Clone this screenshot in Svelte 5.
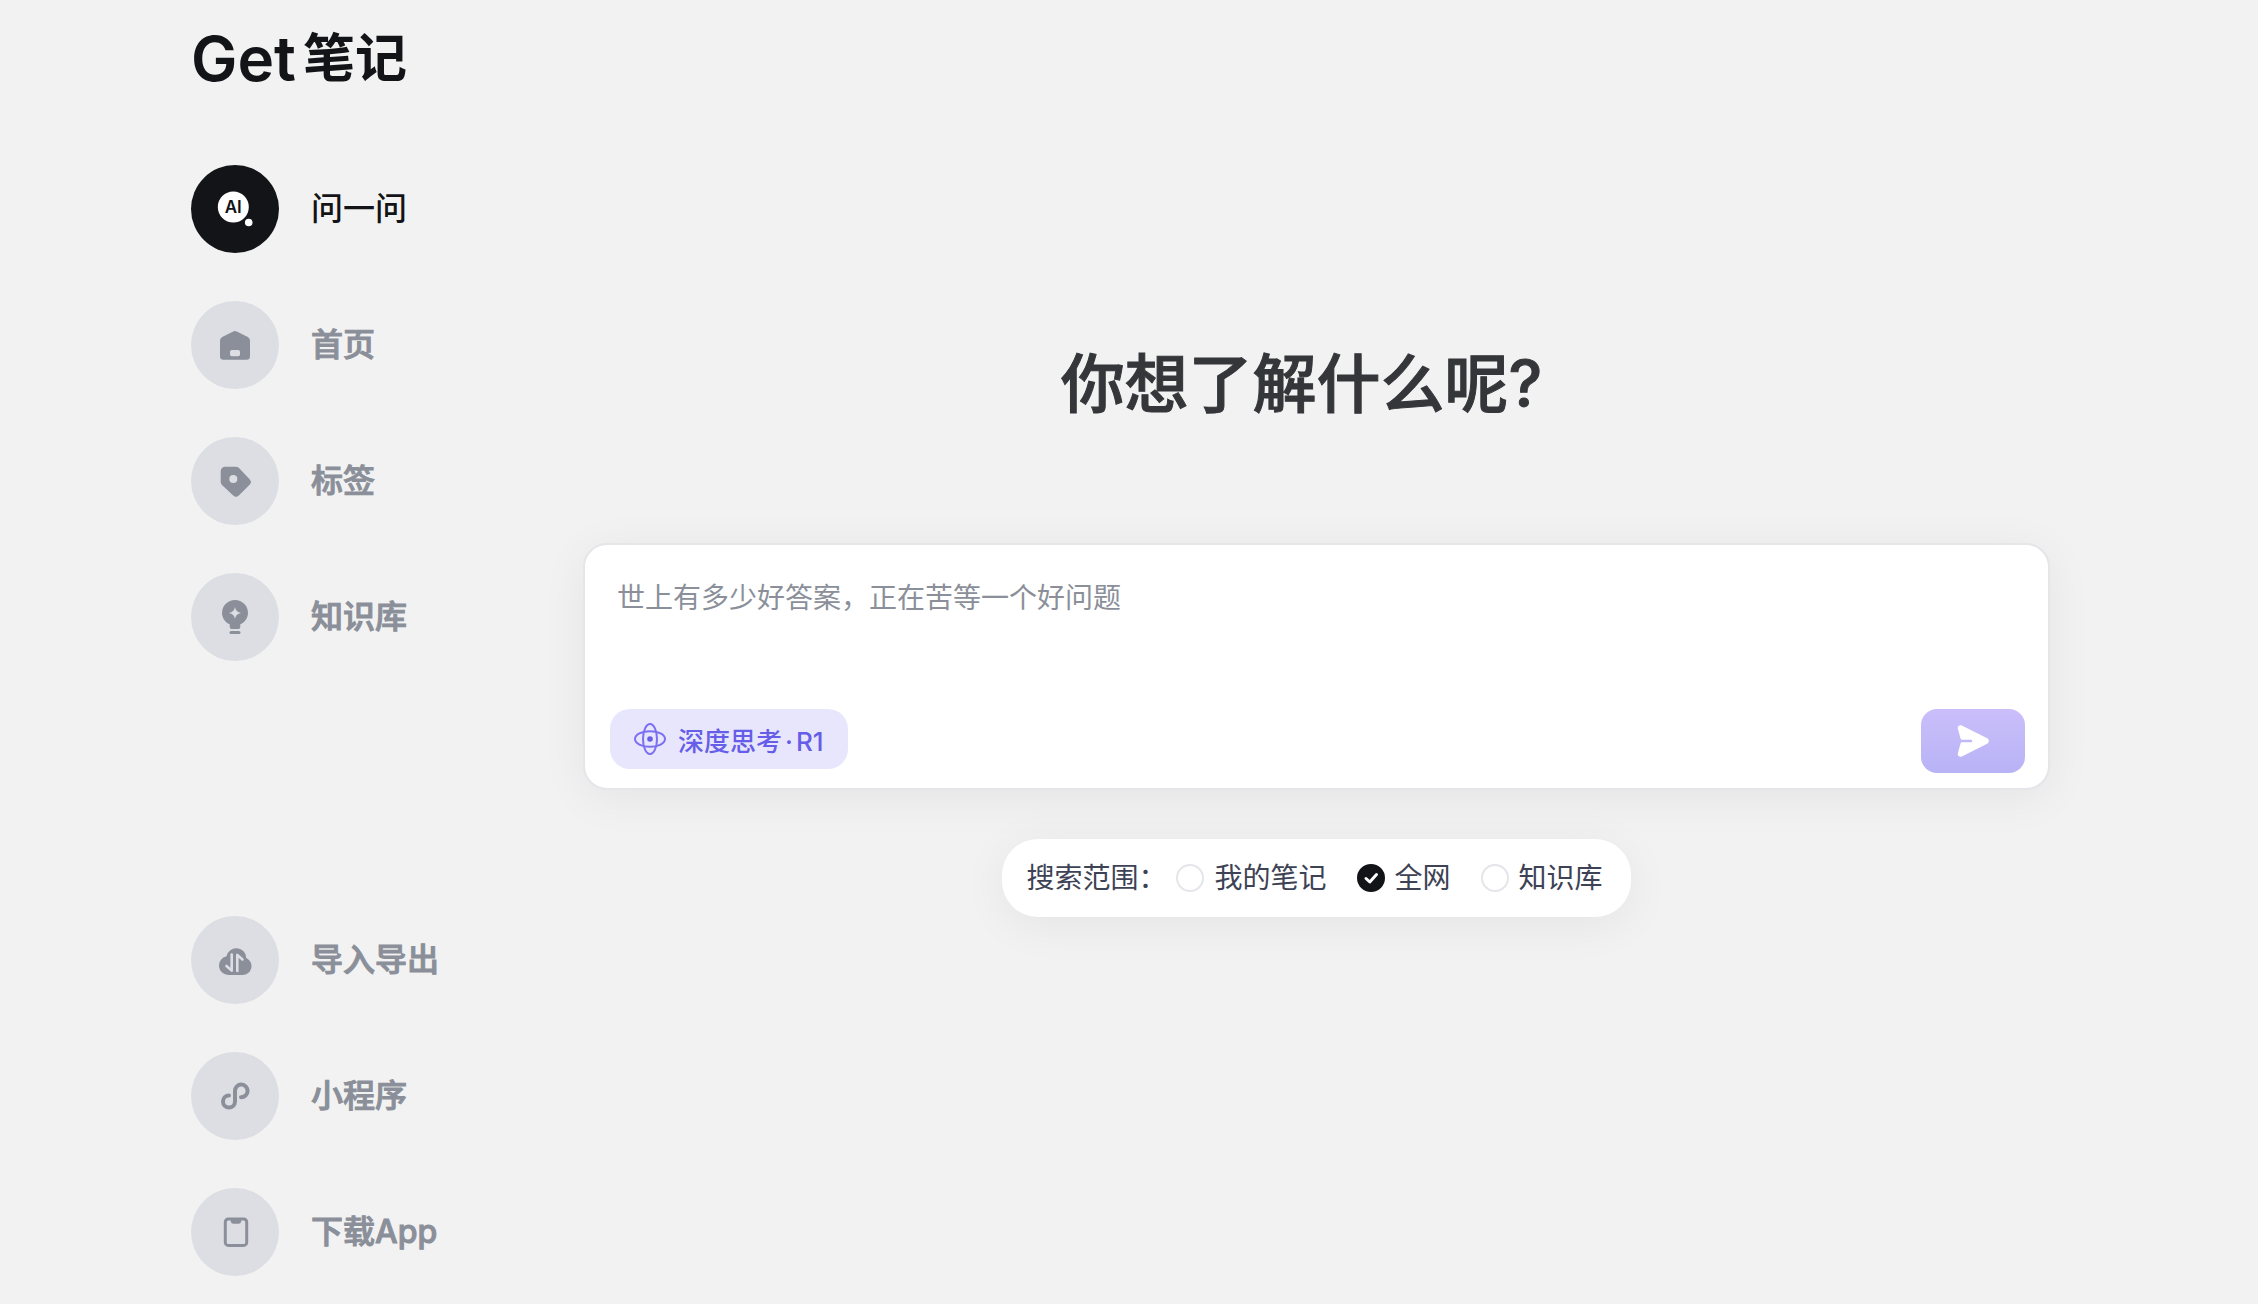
<script lang="ts">
  type NavItem = { id: string; label: string };

  const mainNav: NavItem[] = [
    { id: 'ask', label: '问一问' },
    { id: 'home', label: '首页' },
    { id: 'tag', label: '标签' },
    { id: 'library', label: '知识库' },
  ];

  const footNav: NavItem[] = [
    { id: 'transfer', label: '导入导出' },
    { id: 'mini', label: '小程序' },
    { id: 'app', label: '下载App' },
  ];

  const scopes = ['我的笔记', '全网', '知识库'];

  let active = $state('ask');
  let scope = $state('全网');
  let question = $state('');
  let deepThink = $state(true);
</script>

{#snippet icon(id: string)}
  <svg class="icon" viewBox="0 0 88 88" aria-hidden="true">
    {#if id === 'ask'}
      <circle class="bubble" cx="42.3" cy="42" r="15.5" />
      <circle class="bubble" cx="57.7" cy="57.5" r="3.8" />
      <text class="bubbleText" x="42.3" y="48" text-anchor="middle">AI</text>
    {:else if id === 'home'}
      <path
        fill-rule="evenodd"
        d="M42.2 30.5a4 4 0 0 1 3.6 0l11 5.6a4 4 0 0 1 2.2 3.5v15.6a3.5 3.5 0 0 1-3.5 3.5h-23a3.5 3.5 0 0 1-3.5-3.5v-15.6a4 4 0 0 1 2.2-3.5zM40.8 49a1.8 1.8 0 0 0-1.8 1.8v2.6a1.8 1.8 0 0 0 1.8 1.8h6.4a1.8 1.8 0 0 0 1.8-1.8v-2.6a1.8 1.8 0 0 0-1.8-1.8z"
      />
    {:else if id === 'tag'}
      <path
        fill-rule="evenodd"
        d="M34.2 29.7h10.6a4.5 4.5 0 0 1 3.2 1.3l10.6 11.2a4 4 0 0 1 0 5.6l-10.8 10.7a4 4 0 0 1-5.6 0l-11.2-10.6a4.5 4.5 0 0 1-1.3-3.2v-10.5a4.5 4.5 0 0 1 4.5-4.5zM42.3 38a4 4 0 1 0 0 8 4 4 0 0 0 0-8z"
      />
    {:else if id === 'library'}
      <path
        fill-rule="evenodd"
        d="M44 27a13 13 0 0 1 13 13c0 5-3.2 9.3-7.7 11.3v2.7a2 2 0 0 1-2 2h-6.6a2 2 0 0 1-2-2v-2.7c-4.5-2-7.7-6.3-7.7-11.3a13 13 0 0 1 13-13zM44 34c-.8 3.6-2.2 5-6 6 3.8 1 5.2 2.4 6 6 .8-3.6 2.2-5 6-6-3.8-1-5.2-2.4-6-6z"
      />
      <rect x="38.5" y="58" width="11" height="3" rx="1.5" />
    {:else if id === 'transfer'}
      <path d="M37.4 59a9.5 9.5 0 0 1-1.9-18.8 10 10 0 0 1 19.8 1.8 8.9 8.9 0 0 1-3.7 17z" />
      <path class="cut" d="M35.5 50l5.2 4.6V38.5M51.5 43.5l-5.2-4.6v16.1" />
    {:else if id === 'mini'}
      <path class="line" d="M50 45.2a6.3 6.3 0 1 0-6-6.3v10.6a6 6 0 1 1-6-6" />
    {:else if id === 'app'}
      <rect class="line thin" x="34.3" y="31" width="21.4" height="26.4" rx="3" />
      <path d="M39.8 30.5h10.4v2.5a2.8 2.8 0 0 1-2.8 2.8h-4.8a2.8 2.8 0 0 1-2.8-2.8z" />
    {/if}
  </svg>
{/snippet}

{#snippet navList(items: NavItem[])}
  <ul>
    {#each items as item}
      <li>
        <a
          href={'#' + item.id}
          class:active={active === item.id}
          onclick={() => (active = item.id)}
        >
          <span class="disc">{@render icon(item.id)}</span>
          {item.label}
        </a>
      </li>
    {/each}
  </ul>
{/snippet}

<div class="layout">
  <aside>
    <a class="logo" href="#top"><span class="latin">Get</span>笔记</a>
    <nav>
      {@render navList(mainNav)}
      {@render navList(footNav)}
    </nav>
  </aside>

  <main>
    <h1>你想了解什么呢?</h1>

    <form class="card" onsubmit={(e) => e.preventDefault()}>
      <textarea
        bind:value={question}
        aria-label="问题"
        placeholder="世上有多少好答案，正在苦等一个好问题"
      ></textarea>
      <div class="cardActions">
        <button
          type="button"
          class="think"
          aria-pressed={deepThink}
          onclick={() => (deepThink = !deepThink)}
        >
          <svg viewBox="0 0 32 32" aria-hidden="true">
            <ellipse cx="16" cy="16" rx="15" ry="7.8" />
            <ellipse cx="16" cy="16" rx="7" ry="15" />
            <circle cx="16" cy="16" r="2.8" />
          </svg>
          <span>深度思考<span class="dot">·</span>R1</span>
        </button>
        <button type="submit" class="send" aria-label="发送">
          <svg viewBox="0 0 32 32" aria-hidden="true">
            <path
              d="M4.8.4l25.4 12.9a3 3 0 0 1 0 5.4L4.8 31.6C2.3 32.6.3 30.7.8 28.4L3.5 18.6q.4-1.4 1.7-1.4h8.8a1.2 1.2 0 0 0 0-2.4H5.2q-1.3 0-1.7-1.4L.8 3.6C.3 1.3 2.3-.6 4.8.4z"
            />
          </svg>
        </button>
      </div>
    </form>

    <fieldset class="scope" aria-label="搜索范围">
      <span class="scopeTitle">搜索范围：</span>
      {#each scopes as name}
        <label>
          <span class="radio">
            <input type="radio" name="scope" value={name} bind:group={scope} />
            <svg viewBox="0 0 28 28" aria-hidden="true"><path d="M9 14.5l3.8 3.5 6.7-7.5" /></svg>
          </span>
          {name}
        </label>
      {/each}
    </fieldset>
  </main>
</div>

<style>
  :global(body) {
    margin: 0;
    background: #f2f2f2;
    font-family: Inter, 'Noto Sans CJK SC', sans-serif;
  }

  .layout {
    display: flex;
    box-sizing: border-box;
    min-height: 100vh;
    padding: 0 208px 28px 191px;
  }

  aside {
    display: flex;
    flex-direction: column;
    flex: 0 0 392px;
  }

  .logo {
    display: flex;
    align-items: center;
    gap: 7px;
    height: 117px;
    margin-bottom: 48px;
    color: #131418;
    font-size: 52px;
    line-height: 117px;
    font-weight: 700;
    text-decoration: none;
    white-space: nowrap;
  }

  .latin {
    font-size: 62px;
    font-weight: 600;
  }

  nav {
    display: flex;
    flex: 1;
    flex-direction: column;
    justify-content: space-between;
    gap: 48px;
  }

  ul {
    display: flex;
    flex-direction: column;
    gap: 48px;
    margin: 0;
    padding: 0;
    list-style: none;
  }

  li a {
    display: flex;
    align-items: center;
    gap: 32px;
    color: #8a8f99;
    font-size: 32px;
    line-height: 48px;
    font-weight: 500;
    text-decoration: none;
    -webkit-text-stroke: 1px;
  }

  .disc {
    width: 88px;
    height: 88px;
    border-radius: 50%;
    background: #dddee3;
    -webkit-text-stroke: 0;
  }

  li .active {
    color: #131418;
    -webkit-text-stroke: 0;
  }

  .active .disc {
    background: #131418;
  }

  .icon {
    display: block;
    fill: #8a8f99;
  }

  .bubble {
    fill: #fff;
  }

  .bubbleText {
    fill: #131418;
    font-size: 17px;
    font-weight: 600;
  }

  .line,
  .cut {
    fill: none;
    stroke: #8a8f99;
    stroke-width: 4;
    stroke-linecap: round;
    stroke-linejoin: round;
  }

  .thin {
    stroke-width: 3;
  }

  .cut {
    stroke: #dddee3;
    stroke-width: 2.6;
  }

  main {
    display: flex;
    flex: 1;
    flex-direction: column;
    align-items: center;
    min-width: 0;
    padding-top: 336px;
  }

  h1 {
    margin: 0 0 111px;
    padding-right: 30px;
    color: #35363a;
    font-size: 64px;
    line-height: 96px;
    font-weight: 500;
    -webkit-text-stroke: 1px;
  }

  .card {
    display: flex;
    flex-direction: column;
    box-sizing: border-box;
    width: 100%;
    padding: 32px 23px 15px 25px;
    border: 2px solid #e5e5ea;
    border-radius: 24px;
    background: #fff;
    box-shadow: 0 8px 48px rgba(0, 0, 0, 0.06);
  }

  textarea {
    display: block;
    height: 132px;
    padding: 0 7px;
    border: none;
    background: transparent;
    color: #35363a;
    font: inherit;
    font-size: 28px;
    line-height: 42px;
    resize: none;
  }

  textarea::placeholder {
    color: #8a8f99;
    opacity: 1;
  }

  textarea:focus {
    outline: none;
  }

  .cardActions {
    display: flex;
    align-items: flex-start;
    justify-content: space-between;
  }

  .think {
    display: flex;
    align-items: center;
    gap: 12px;
    height: 60px;
    padding: 0 24px;
    border: none;
    border-radius: 20px;
    background: #e8e6fc;
    color: #665ee8;
    font: inherit;
    font-size: 26px;
    font-weight: 500;
    cursor: pointer;
  }

  .think svg {
    width: 32px;
    height: 32px;
  }

  .think ellipse {
    fill: none;
    stroke: #7b6ff2;
    stroke-width: 2;
  }

  .think circle {
    fill: #665ee8;
  }

  .dot {
    margin: 0 3px;
  }

  .send {
    display: flex;
    align-items: center;
    justify-content: center;
    width: 104px;
    height: 64px;
    border: none;
    border-radius: 16px;
    background: linear-gradient(#cabefa, #b8b3f6);
    cursor: pointer;
  }

  .send svg {
    width: 32px;
    height: 32px;
    fill: #fff;
  }

  .scope {
    display: flex;
    align-items: center;
    gap: 30px;
    margin: 49px 0 0;
    padding: 18px 28px 18px 24px;
    border: none;
    border-radius: 36px;
    background: #fff;
    color: #3d4254;
    font-size: 28px;
    line-height: 42px;
    box-shadow: 0 8px 48px rgba(0, 0, 0, 0.06);
  }

  .scopeTitle {
    margin-right: -20px;
  }

  .scope label {
    display: flex;
    align-items: center;
    gap: 10px;
    cursor: pointer;
  }

  .radio {
    display: grid;
    width: 28px;
    height: 28px;
  }

  .radio input,
  .radio svg {
    grid-area: 1 / 1;
    box-sizing: border-box;
    width: 28px;
    height: 28px;
    margin: 0;
  }

  .radio input {
    appearance: none;
    border: 2px solid #e5e5ea;
    border-radius: 50%;
    background: #fff;
    cursor: pointer;
  }

  .radio input:checked {
    border-color: #131418;
    background: #131418;
  }

  .radio svg {
    fill: none;
    stroke: #fff;
    stroke-width: 3;
    stroke-linecap: round;
    stroke-linejoin: round;
    pointer-events: none;
  }
</style>
